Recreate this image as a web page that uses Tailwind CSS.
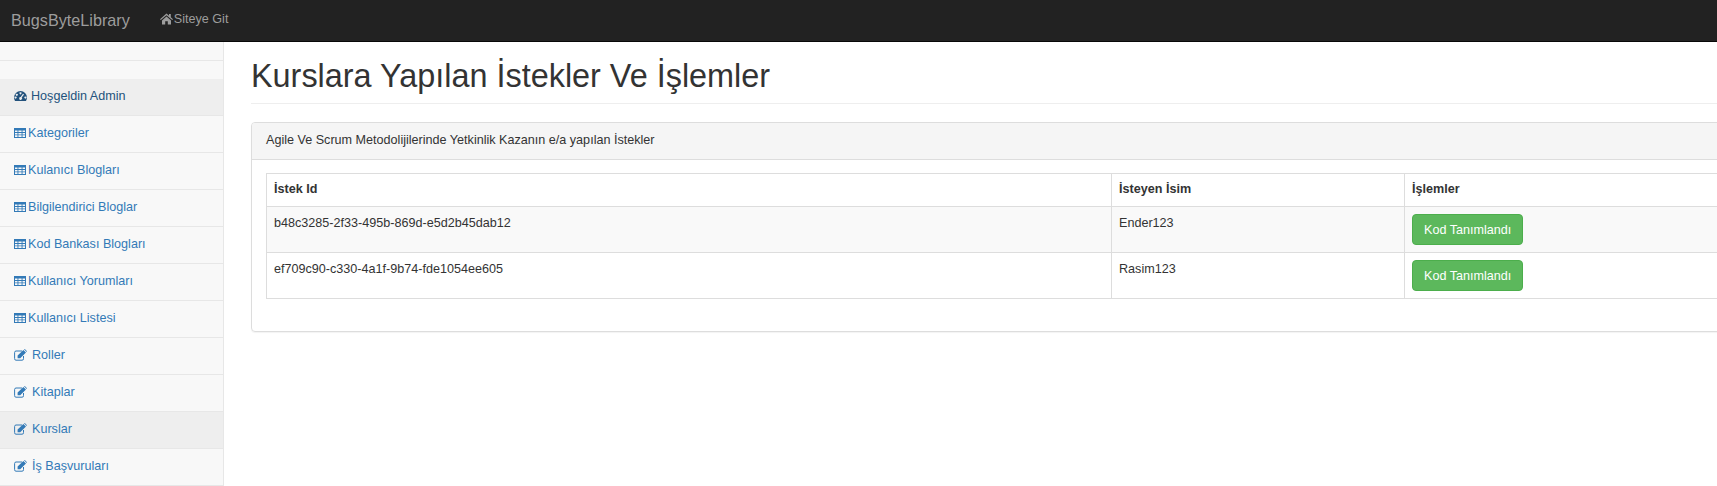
<!DOCTYPE html>
<html lang="tr">
<head>
	<meta charset="UTF-8">
	<title>BugsByteLibrary</title>
	<script src="https://cdn.jsdelivr.net/npm/@tailwindcss/browser@4"></script>
</head>
<body class="bg-white font-['Liberation_Sans',Arial,sans-serif] text-[12.6px] leading-[18px] text-[#333] overflow-hidden">
	<div class="w-[1717px] h-[486px] overflow-hidden">
		<!-- Top navbar -->
		<header class="h-[42px] bg-[#222] border-b border-[#080808] flex items-start text-[#9d9d9d]">
			<a href="#" class="ml-[11px] mt-[10px] text-[16.2px] leading-[20px]">BugsByteLibrary</a>
			<a href="#" class="ml-[30px] mt-[10px] flex items-center">
				<svg class="w-[13px] h-[12px] mr-px" viewBox="0 0 13 12" fill="currentColor"><path d="M6.5 0.5 L9 2.7 V1 H10.8 V4.3 L13 6.3 L12.2 7.1 L6.5 2.2 L0.8 7.1 L0 6.3 Z M2 7.4 L6.5 3.6 L11 7.4 V11.5 H7.8 V8.3 H5.2 V11.5 H2 Z"/></svg>
				<span>Siteye Git</span>
			</a>
		</header>

		<div class="flex h-[444px]">
			<!-- Sidebar -->
			<aside class="w-[224px] h-[444px] shrink-0 bg-[#f8f8f8] border-r border-[#e7e7e7]">
				<div class="h-[19px] border-b border-[#e7e7e7]"></div>
				<div class="h-[18px]"></div>
				<ul class="text-[#337ab7]">
					<li class="h-[37px] px-[14px] pb-[2px] flex items-center bg-[#eee] border-b border-[#e7e7e7] text-[#23527c]">
						<svg class="w-[13px] h-[11px] mr-[4px]" viewBox="0 0 13 11" fill="currentColor"><path fill-rule="evenodd" d="M6.5 0 A6.5 6.5 0 0 1 13 6.5 C13 7.8 12.6 9 12 10 H1 C0.4 9 0 7.8 0 6.5 A6.5 6.5 0 0 1 6.5 0 Z M6.5 1.2 a1 1 0 1 0 .01 0 Z M2.8 2.8 a1 1 0 1 0 .01 0 Z M1.6 5.6 a1 1 0 1 0 .01 0 Z M11.4 5.6 a1 1 0 1 0 .01 0 Z M9 2.8 L6.7 6 a1.4 1.4 0 1 0 1 .5 L10 3.4 Z"/></svg>
						<a href="#">Hoşgeldin Admin</a>
					</li>
					<li class="h-[37px] px-[14px] pb-[2px] flex items-center border-b border-[#e7e7e7]">
						<svg class="w-[12px] h-[10px] mr-[2px]" viewBox="0 0 12 10" fill="currentColor"><path fill-rule="evenodd" d="M0 0 H12 V10 H0 Z M1 2.4 V4 H3.5 V2.4 Z M4.4 2.4 V4 H7.6 V2.4 Z M8.5 2.4 V4 H11 V2.4 Z M1 4.9 V6.4 H3.5 V4.9 Z M4.4 4.9 V6.4 H7.6 V4.9 Z M8.5 4.9 V6.4 H11 V4.9 Z M1 7.3 V9 H3.5 V7.3 Z M4.4 7.3 V9 H7.6 V7.3 Z M8.5 7.3 V9 H11 V7.3 Z"/></svg>
						<a href="#">Kategoriler</a>
					</li>
					<li class="h-[37px] px-[14px] pb-[2px] flex items-center border-b border-[#e7e7e7]">
						<svg class="w-[12px] h-[10px] mr-[2px]" viewBox="0 0 12 10" fill="currentColor"><path fill-rule="evenodd" d="M0 0 H12 V10 H0 Z M1 2.4 V4 H3.5 V2.4 Z M4.4 2.4 V4 H7.6 V2.4 Z M8.5 2.4 V4 H11 V2.4 Z M1 4.9 V6.4 H3.5 V4.9 Z M4.4 4.9 V6.4 H7.6 V4.9 Z M8.5 4.9 V6.4 H11 V4.9 Z M1 7.3 V9 H3.5 V7.3 Z M4.4 7.3 V9 H7.6 V7.3 Z M8.5 7.3 V9 H11 V7.3 Z"/></svg>
						<a href="#">Kulanıcı Blogları</a>
					</li>
					<li class="h-[37px] px-[14px] pb-[2px] flex items-center border-b border-[#e7e7e7]">
						<svg class="w-[12px] h-[10px] mr-[2px]" viewBox="0 0 12 10" fill="currentColor"><path fill-rule="evenodd" d="M0 0 H12 V10 H0 Z M1 2.4 V4 H3.5 V2.4 Z M4.4 2.4 V4 H7.6 V2.4 Z M8.5 2.4 V4 H11 V2.4 Z M1 4.9 V6.4 H3.5 V4.9 Z M4.4 4.9 V6.4 H7.6 V4.9 Z M8.5 4.9 V6.4 H11 V4.9 Z M1 7.3 V9 H3.5 V7.3 Z M4.4 7.3 V9 H7.6 V7.3 Z M8.5 7.3 V9 H11 V7.3 Z"/></svg>
						<a href="#">Bilgilendirici Bloglar</a>
					</li>
					<li class="h-[37px] px-[14px] pb-[2px] flex items-center border-b border-[#e7e7e7]">
						<svg class="w-[12px] h-[10px] mr-[2px]" viewBox="0 0 12 10" fill="currentColor"><path fill-rule="evenodd" d="M0 0 H12 V10 H0 Z M1 2.4 V4 H3.5 V2.4 Z M4.4 2.4 V4 H7.6 V2.4 Z M8.5 2.4 V4 H11 V2.4 Z M1 4.9 V6.4 H3.5 V4.9 Z M4.4 4.9 V6.4 H7.6 V4.9 Z M8.5 4.9 V6.4 H11 V4.9 Z M1 7.3 V9 H3.5 V7.3 Z M4.4 7.3 V9 H7.6 V7.3 Z M8.5 7.3 V9 H11 V7.3 Z"/></svg>
						<a href="#">Kod Bankası Blogları</a>
					</li>
					<li class="h-[37px] px-[14px] pb-[2px] flex items-center border-b border-[#e7e7e7]">
						<svg class="w-[12px] h-[10px] mr-[2px]" viewBox="0 0 12 10" fill="currentColor"><path fill-rule="evenodd" d="M0 0 H12 V10 H0 Z M1 2.4 V4 H3.5 V2.4 Z M4.4 2.4 V4 H7.6 V2.4 Z M8.5 2.4 V4 H11 V2.4 Z M1 4.9 V6.4 H3.5 V4.9 Z M4.4 4.9 V6.4 H7.6 V4.9 Z M8.5 4.9 V6.4 H11 V4.9 Z M1 7.3 V9 H3.5 V7.3 Z M4.4 7.3 V9 H7.6 V7.3 Z M8.5 7.3 V9 H11 V7.3 Z"/></svg>
						<a href="#">Kullanıcı Yorumları</a>
					</li>
					<li class="h-[37px] px-[14px] pb-[2px] flex items-center border-b border-[#e7e7e7]">
						<svg class="w-[12px] h-[10px] mr-[2px]" viewBox="0 0 12 10" fill="currentColor"><path fill-rule="evenodd" d="M0 0 H12 V10 H0 Z M1 2.4 V4 H3.5 V2.4 Z M4.4 2.4 V4 H7.6 V2.4 Z M8.5 2.4 V4 H11 V2.4 Z M1 4.9 V6.4 H3.5 V4.9 Z M4.4 4.9 V6.4 H7.6 V4.9 Z M8.5 4.9 V6.4 H11 V4.9 Z M1 7.3 V9 H3.5 V7.3 Z M4.4 7.3 V9 H7.6 V7.3 Z M8.5 7.3 V9 H11 V7.3 Z"/></svg>
						<a href="#">Kullanıcı Listesi</a>
					</li>
					<li class="h-[37px] px-[14px] pb-[2px] flex items-center border-b border-[#e7e7e7]">
						<svg class="w-[13px] h-[12px] mr-[5px]" viewBox="0 0 13 12"><path d="M9.5 7 V9.5 A1.5 1.5 0 0 1 8 11.2 H2 A1.5 1.5 0 0 1 .6 9.5 V3.5 A1.5 1.5 0 0 1 2 2 H8" fill="none" stroke="currentColor"/><path d="M3.6 6.6 L9.4 .9 L12 3.5 L6.2 9.2 H3.6 Z M10 .3 L10.8 0 L13 2.2 L12.7 3 Z" fill="currentColor"/></svg>
						<a href="#">Roller</a>
					</li>
					<li class="h-[37px] px-[14px] pb-[2px] flex items-center border-b border-[#e7e7e7]">
						<svg class="w-[13px] h-[12px] mr-[5px]" viewBox="0 0 13 12"><path d="M9.5 7 V9.5 A1.5 1.5 0 0 1 8 11.2 H2 A1.5 1.5 0 0 1 .6 9.5 V3.5 A1.5 1.5 0 0 1 2 2 H8" fill="none" stroke="currentColor"/><path d="M3.6 6.6 L9.4 .9 L12 3.5 L6.2 9.2 H3.6 Z M10 .3 L10.8 0 L13 2.2 L12.7 3 Z" fill="currentColor"/></svg>
						<a href="#">Kitaplar</a>
					</li>
					<li class="h-[37px] px-[14px] pb-[2px] flex items-center bg-[#eee] border-b border-[#e7e7e7]">
						<svg class="w-[13px] h-[12px] mr-[5px]" viewBox="0 0 13 12"><path d="M9.5 7 V9.5 A1.5 1.5 0 0 1 8 11.2 H2 A1.5 1.5 0 0 1 .6 9.5 V3.5 A1.5 1.5 0 0 1 2 2 H8" fill="none" stroke="currentColor"/><path d="M3.6 6.6 L9.4 .9 L12 3.5 L6.2 9.2 H3.6 Z M10 .3 L10.8 0 L13 2.2 L12.7 3 Z" fill="currentColor"/></svg>
						<a href="#">Kurslar</a>
					</li>
					<li class="h-[37px] px-[14px] pb-[2px] flex items-center border-b border-[#e7e7e7]">
						<svg class="w-[13px] h-[12px] mr-[5px]" viewBox="0 0 13 12"><path d="M9.5 7 V9.5 A1.5 1.5 0 0 1 8 11.2 H2 A1.5 1.5 0 0 1 .6 9.5 V3.5 A1.5 1.5 0 0 1 2 2 H8" fill="none" stroke="currentColor"/><path d="M3.6 6.6 L9.4 .9 L12 3.5 L6.2 9.2 H3.6 Z M10 .3 L10.8 0 L13 2.2 L12.7 3 Z" fill="currentColor"/></svg>
						<a href="#">İş Başvuruları</a>
					</li>
				</ul>
			</aside>

			<!-- Page content -->
			<main class="pl-[27px] w-[1800px] shrink-0">
				<h1 class="mt-[14px] h-[48px] text-[32.4px] leading-[40px] font-normal border-b border-[#eee]">Kurslara Yapılan İstekler Ve İşlemler</h1>
				<section class="mt-[18px] h-[210px] border border-[#ddd] rounded-[4px] shadow-[0_1px_1px_rgba(0,0,0,0.05)]">
					<div class="h-[37px] px-[14px] py-[8px] bg-[#f5f5f5] border-b border-[#ddd] rounded-t-[3px]">Agile Ve Scrum Metodolijilerinde Yetkinlik Kazanın e/a yapılan İstekler</div>
					<div class="pt-[13px] pl-[14px]">
						<table class="w-[1600px] table-fixed border-collapse">
							<colgroup>
								<col class="w-[845px]">
								<col class="w-[293px]">
								<col>
							</colgroup>
							<thead>
								<tr class="h-[33px]">
									<th class="border border-[#ddd] px-[7px] py-[6px] text-left align-top">İstek Id</th>
									<th class="border border-[#ddd] px-[7px] py-[6px] text-left align-top">İsteyen İsim</th>
									<th class="border border-[#ddd] px-[7px] py-[6px] text-left align-top">İşlemler</th>
								</tr>
							</thead>
							<tbody>
								<tr class="h-[46px] bg-[#f9f9f9]">
									<td class="border border-[#ddd] px-[7px] py-[7px] align-top">b48c3285-2f33-495b-869d-e5d2b45dab12</td>
									<td class="border border-[#ddd] px-[7px] py-[7px] align-top">Ender123</td>
									<td class="border border-[#ddd] px-[7px] py-[7px] align-top"><button class="px-[11px] h-[31px] block bg-[#5cb85c] border border-[#4cae4c] rounded-[4px] text-white">Kod Tanımlandı</button></td>
								</tr>
								<tr class="h-[46px]">
									<td class="border border-[#ddd] px-[7px] py-[7px] align-top">ef709c90-c330-4a1f-9b74-fde1054ee605</td>
									<td class="border border-[#ddd] px-[7px] py-[7px] align-top">Rasim123</td>
									<td class="border border-[#ddd] px-[7px] py-[7px] align-top"><button class="px-[11px] h-[31px] block bg-[#5cb85c] border border-[#4cae4c] rounded-[4px] text-white">Kod Tanımlandı</button></td>
								</tr>
							</tbody>
						</table>
					</div>
				</section>
			</main>
		</div>
	</div>
</body>
</html>
